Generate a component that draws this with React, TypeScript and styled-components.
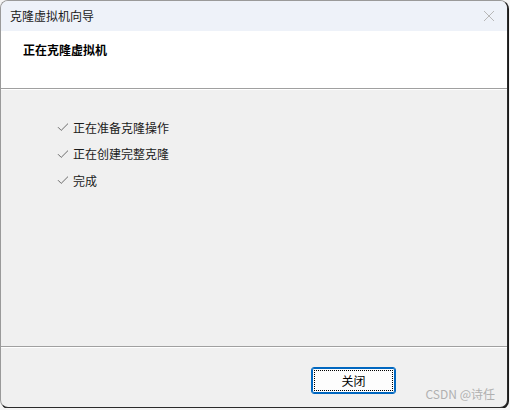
import React from "react";
import styled, { createGlobalStyle } from "styled-components";

const GlobalStyle = createGlobalStyle`
  html, body {
    margin: 0;
    padding: 0;
    background: #f4f4f4;
  }
  body {
    font-family: "Noto Sans CJK SC", "Noto Sans", sans-serif;
  }
`;

const Window = styled.div`
  width: 508px;
  height: 408px;
  box-sizing: border-box;
  border: 1px solid #9a9a9a;
  border-right-color: #2a2a2a;
  border-bottom-color: #2a2a2a;
  border-radius: 8px;
  overflow: hidden;
  display: flex;
  flex-direction: column;
  background: #f0f0f0;
  box-shadow: 1px 1px 0 #1a1a1a;
`;

const TitleBar = styled.div`
  height: 30px;
  flex-shrink: 0;
  background: #eef2f9;
  display: flex;
  align-items: center;
  justify-content: space-between;
  padding: 0 9px 0 9px;
`;

const TitleText = styled.span`
  font-size: 12px;
  color: #1a1a1a;
  line-height: 1;
`;

const CloseButton = styled.div`
  width: 14px;
  height: 14px;
  display: flex;
  align-items: center;
  justify-content: center;
  margin-right: 2px;
`;

const Header = styled.div`
  height: 58px;
  flex-shrink: 0;
  background: #ffffff;
  border-bottom: 1px solid #a0a0a0;
  padding: 11px 0 0 22px;
  box-sizing: border-box;
`;

const HeaderTitle = styled.div`
  font-size: 12px;
  font-weight: bold;
  color: #000;
  line-height: 16px;
`;

const Body = styled.div`
  flex: 1;
  padding: 30px 0 0 56px;
  display: flex;
  flex-direction: column;
  gap: 10.5px;
  border-bottom: 1px solid #a0a0a0;
  box-shadow: inset 0 1px 0 #ffffff;
`;

const Step = styled.div`
  display: flex;
  align-items: center;
  gap: 4px;
  height: 16px;
  font-size: 12px;
  color: #1a1a1a;
`;

const Footer = styled.div`
  height: 60px;
  flex-shrink: 0;
  display: flex;
  justify-content: flex-end;
  align-items: flex-start;
  padding: 20px 111px 0 0;
  box-sizing: border-box;
  position: relative;
  box-shadow: inset 0 1px 0 #ffffff;
`;

const Button = styled.button`
  width: 85px;
  height: 27px;
  box-sizing: border-box;
  border: 1px solid #0067c0;
  border-radius: 3px;
  background: #fdfdfd;
  box-shadow: inset 0 0 0 1px #0067c0;
  padding: 2px;
  font-family: inherit;
  font-size: 12px;
  color: #000;
  cursor: pointer;
`;

const FocusRing = styled.span`
  display: flex;
  align-items: center;
  justify-content: center;
  width: 100%;
  height: 100%;
  box-sizing: border-box;
  border: 1px dotted #000;
`;

const Watermark = styled.span`
  position: absolute;
  right: 12px;
  bottom: 5px;
  font-size: 12px;
  color: #b0b0b0;
  font-family: "Noto Sans CJK SC", "Noto Sans", sans-serif;
`;

const Check = () => (
  <svg width="12" height="10" viewBox="0 0 12 10">
    <path d="M1 5.2 L4.2 8.4 L11 1.6" fill="none" stroke="#6a6a6a" strokeWidth="1" />
  </svg>
);

const steps = ["正在准备克隆操作", "正在创建完整克隆", "完成"];

const App: React.FC = () => {
  return (
    <>
      <GlobalStyle />
      <Window>
        <TitleBar>
          <TitleText>克隆虚拟机向导</TitleText>
          <CloseButton>
            <svg width="12" height="12" viewBox="0 0 12 12">
              <path d="M1 1 L11 11 M11 1 L1 11" stroke="#b8b8b8" strokeWidth="1" />
            </svg>
          </CloseButton>
        </TitleBar>
        <Header>
          <HeaderTitle>正在克隆虚拟机</HeaderTitle>
        </Header>
        <Body>
          {steps.map((s) => (
            <Step key={s}>
              <Check />
              {s}
            </Step>
          ))}
        </Body>
        <Footer>
          <Button>
            <FocusRing>关闭</FocusRing>
          </Button>
          <Watermark>CSDN @诗任</Watermark>
        </Footer>
      </Window>
    </>
  );
};

export default App;
